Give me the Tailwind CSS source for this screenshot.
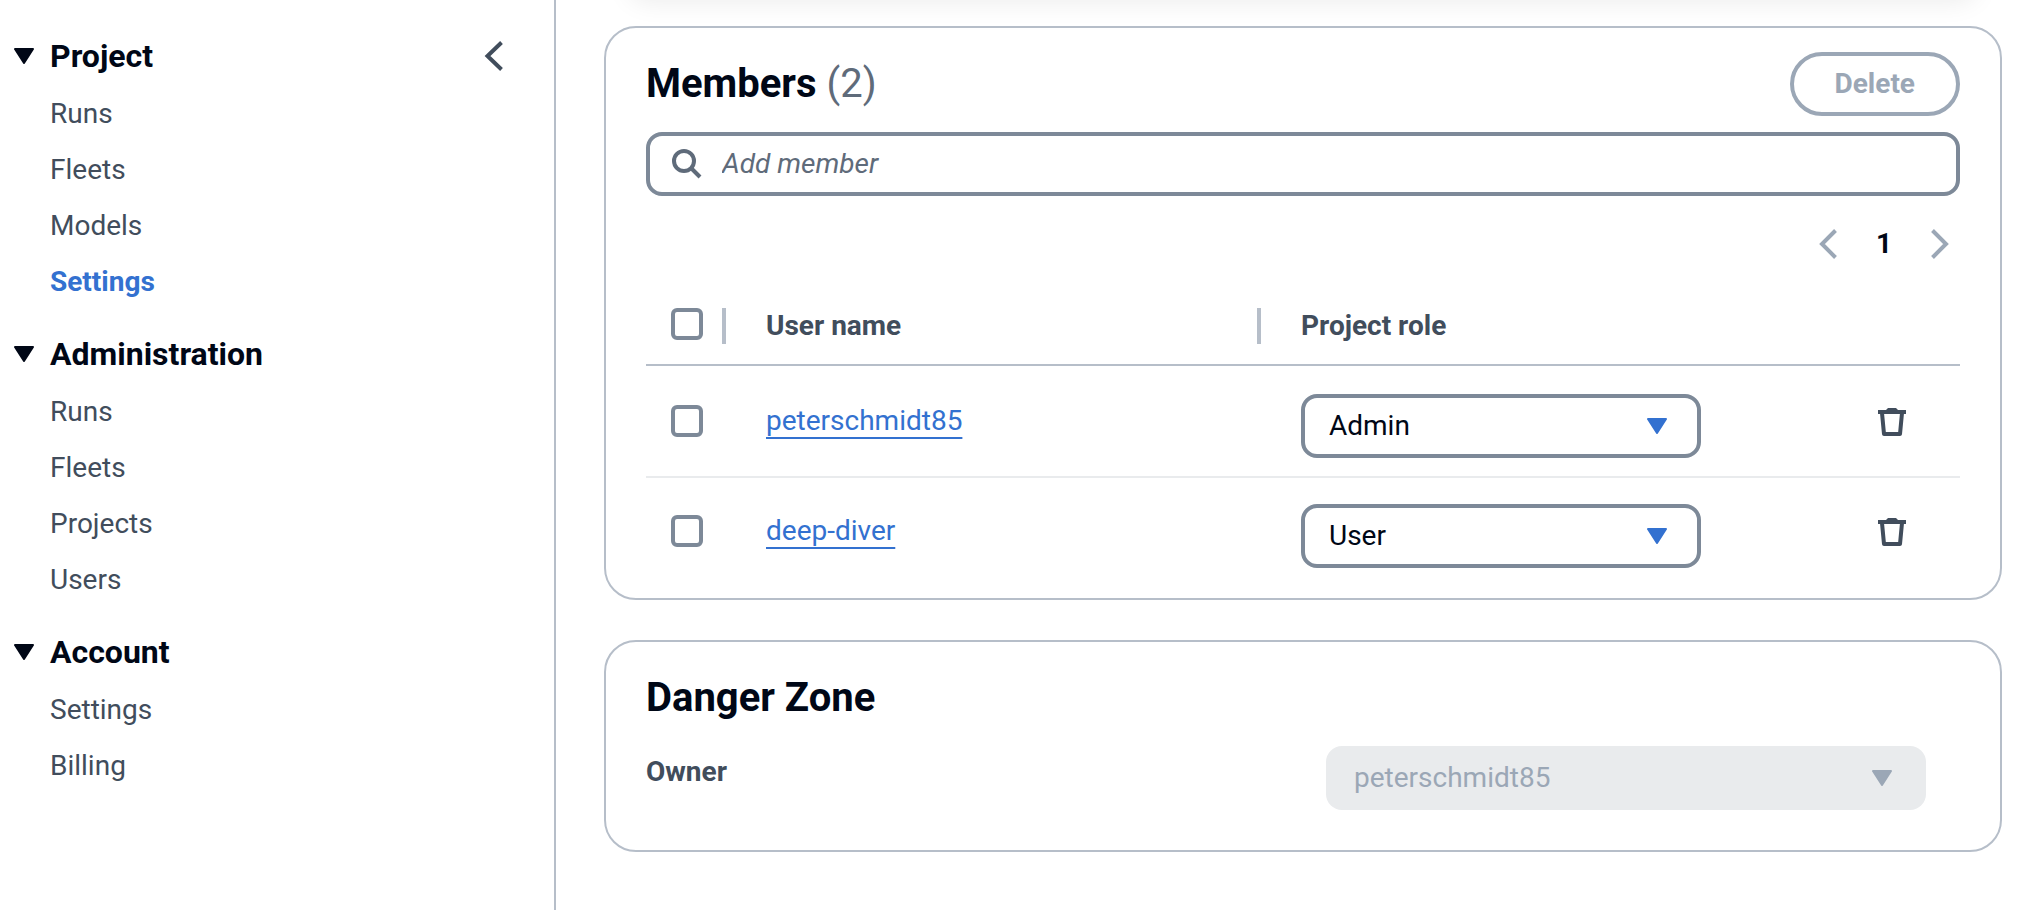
<!DOCTYPE html>
<html lang="en">
<head>
<meta charset="utf-8">
<title>Project settings</title>
<script src="https://cdn.jsdelivr.net/npm/@tailwindcss/browser@4"></script>
</head>
<body class="flex min-h-screen bg-white font-[Roboto,sans-serif] text-[28px] leading-10 text-[#414d5c]">

<nav aria-label="Main" class="flex w-[556px] shrink-0 items-start justify-between border-r-2 border-[#b6bec9] pt-9 pr-[51px] pl-[14px]">
  <div class="flex flex-col gap-8">
    <section>
      <button type="button" aria-expanded="true" class="flex h-10 items-center gap-4 text-[32px] font-bold text-[#000716]">
        <svg class="h-4 w-5" viewBox="0 0 20 16" fill="currentColor" stroke="currentColor" stroke-width="2" stroke-linejoin="round" aria-hidden="true"><path d="M1 1h18l-9 14z"/></svg>
        Project
      </button>
      <ul class="mt-[18px] flex flex-col gap-4 pl-9">
        <li><a href="#">Runs</a></li>
        <li><a href="#">Fleets</a></li>
        <li><a href="#">Models</a></li>
        <li><a href="#" aria-current="page" class="font-bold text-[#3371d0]">Settings</a></li>
      </ul>
    </section>
    <section>
      <button type="button" aria-expanded="true" class="flex h-10 items-center gap-4 text-[32px] font-bold text-[#000716]">
        <svg class="h-4 w-5" viewBox="0 0 20 16" fill="currentColor" stroke="currentColor" stroke-width="2" stroke-linejoin="round" aria-hidden="true"><path d="M1 1h18l-9 14z"/></svg>
        Administration
      </button>
      <ul class="mt-[18px] flex flex-col gap-4 pl-9">
        <li><a href="#">Runs</a></li>
        <li><a href="#">Fleets</a></li>
        <li><a href="#">Projects</a></li>
        <li><a href="#">Users</a></li>
      </ul>
    </section>
    <section>
      <button type="button" aria-expanded="true" class="flex h-10 items-center gap-4 text-[32px] font-bold text-[#000716]">
        <svg class="h-4 w-5" viewBox="0 0 20 16" fill="currentColor" stroke="currentColor" stroke-width="2" stroke-linejoin="round" aria-hidden="true"><path d="M1 1h18l-9 14z"/></svg>
        Account
      </button>
      <ul class="mt-[18px] flex flex-col gap-4 pl-9">
        <li><a href="#">Settings</a></li>
        <li><a href="#">Billing</a></li>
      </ul>
    </section>
  </div>
  <button type="button" aria-label="Close navigation" class="flex h-10 items-center">
    <svg class="h-[30px] w-[19px]" viewBox="0 0 19 30" fill="none" stroke="currentColor" stroke-width="4" aria-hidden="true"><path d="M17.5 1.5 3.5 15l14 13.5"/></svg>
  </button>
</nav>

<main class="flex min-w-0 flex-1 flex-col overflow-hidden pr-[38px] pl-12">
  <!-- Lower edge of the sticky card scrolled above the view -->
  <div class="mx-6 -mt-10 mb-[26px] h-10 shrink-0 rounded-[32px] shadow-[0_2px_26px_rgba(0,0,0,0.08)]"></div>

  <section class="rounded-[32px] border-2 border-[#b6bec9] px-10 pt-6 pb-3">
    <div class="flex items-center justify-between">
      <h2 class="text-[40px] leading-[48px] font-bold text-[#000716]">Members <span class="font-normal text-[#5f6b7a]">(2)</span></h2>
      <button type="button" disabled class="h-16 rounded-full border-4 border-[#9ba7b6] px-[41px] font-bold text-[#9ba7b6]">Delete</button>
    </div>

    <label class="mt-4 flex h-16 items-center gap-5 rounded-2xl border-4 border-[#7d8998] px-[22px] text-[#5f6b7a]">
      <svg class="size-[30px] shrink-0" viewBox="0 0 30 30" fill="none" stroke="currentColor" stroke-width="4" aria-hidden="true"><circle cx="12" cy="12" r="10"/><path d="m19 19 9 9"/></svg>
      <input type="text" aria-label="Add member" placeholder="Add member" class="min-w-0 flex-1 outline-none placeholder:text-[#5f6b7a] placeholder:italic">
    </label>

    <div class="mt-7 flex h-10 items-center justify-end gap-[39px] pr-[11px]">
      <button type="button" disabled aria-label="Previous page" class="text-[#9ba7b6]">
        <svg class="h-[30px] w-[18px]" viewBox="0 0 18 30" fill="none" stroke="currentColor" stroke-width="4" aria-hidden="true"><path d="M16.5 1.5 3 15l13.5 13.5"/></svg>
      </button>
      <button type="button" aria-current="page" class="font-bold text-[#000716]">1</button>
      <button type="button" disabled aria-label="Next page" class="text-[#9ba7b6]">
        <svg class="h-[30px] w-[18px]" viewBox="0 0 18 30" fill="none" stroke="currentColor" stroke-width="4" aria-hidden="true"><path d="M1.5 1.5 15 15 1.5 28.5"/></svg>
      </button>
    </div>

    <table class="mt-6 w-full table-fixed border-separate border-spacing-0 text-left">
      <thead>
        <tr class="h-[78px]">
          <th scope="col" class="w-20 border-b-2 border-[#b6bec9] p-0">
            <div class="flex h-9 items-start justify-between pl-[25px]">
              <input type="checkbox" aria-label="Select all members" class="size-8 appearance-none rounded-md border-4 border-[#7d8998] checked:bg-[#3371d0]">
              <span class="h-9 w-1 bg-[#b6bec9]"></span>
            </div>
          </th>
          <th scope="col" class="w-[535px] border-b-2 border-[#b6bec9] p-0">
            <div class="flex h-9 items-center justify-between pl-10">
              <span class="font-bold">User name</span>
              <span class="h-9 w-1 bg-[#b6bec9]"></span>
            </div>
          </th>
          <th scope="col" class="border-b-2 border-[#b6bec9] p-0 pl-10 font-bold">Project role</th>
          <th scope="col" class="w-40 border-b-2 border-[#b6bec9] p-0" aria-label="Actions"></th>
        </tr>
      </thead>
      <tbody>
        <tr>
          <td class="border-t-2 border-b-2 border-t-transparent border-b-[#e9ebed] pb-0.5 pl-[25px]">
            <input type="checkbox" aria-label="Select peterschmidt85" class="block size-8 appearance-none rounded-md border-4 border-[#7d8998] checked:bg-[#3371d0]">
          </td>
          <td class="border-t-2 border-b-2 border-t-transparent border-b-[#e9ebed] pb-0.5 pl-10">
            <a href="#" class="text-[#3371d0] underline decoration-2 underline-offset-[7px]">peterschmidt85</a>
          </td>
          <td class="border-t-2 border-b-2 border-t-transparent border-b-[#e9ebed] pt-[26px] pb-[18px] pl-10">
            <div class="relative w-[400px] max-w-full">
              <select aria-label="Role of peterschmidt85" class="block h-16 w-full appearance-none rounded-2xl border-4 border-[#7d8998] pr-16 pl-6 text-[#000716]"><option>Admin</option><option>User</option></select>
              <svg class="pointer-events-none absolute top-6 right-[34px] h-4 w-5 text-[#3371d0]" viewBox="0 0 20 16" fill="currentColor" stroke="currentColor" stroke-width="2" stroke-linejoin="round" aria-hidden="true"><path d="M1 1h18l-9 14z"/></svg>
            </div>
          </td>
          <td class="border-t-2 border-b-2 border-t-transparent border-b-[#e9ebed] pr-[54px]">
            <button type="button" aria-label="Remove peterschmidt85" class="ml-auto block">
              <svg class="size-7" viewBox="0 0 28 28" aria-hidden="true"><path d="M10 0h8l2 2h8v4H0V2h8z" fill="currentColor"/><path d="m4 5 2 21h16l2-21" fill="none" stroke="currentColor" stroke-width="4" stroke-linejoin="round"/></svg>
            </button>
          </td>
        </tr>
        <tr>
          <td class="pb-0.5 pl-[25px]">
            <input type="checkbox" aria-label="Select deep-diver" class="block size-8 appearance-none rounded-md border-4 border-[#7d8998] checked:bg-[#3371d0]">
          </td>
          <td class="pb-0.5 pl-10">
            <a href="#" class="text-[#3371d0] underline decoration-2 underline-offset-[7px]">deep-diver</a>
          </td>
          <td class="pt-[26px] pb-[18px] pl-10">
            <div class="relative w-[400px] max-w-full">
              <select aria-label="Role of deep-diver" class="block h-16 w-full appearance-none rounded-2xl border-4 border-[#7d8998] pr-16 pl-6 text-[#000716]"><option>User</option><option>Admin</option></select>
              <svg class="pointer-events-none absolute top-6 right-[34px] h-4 w-5 text-[#3371d0]" viewBox="0 0 20 16" fill="currentColor" stroke="currentColor" stroke-width="2" stroke-linejoin="round" aria-hidden="true"><path d="M1 1h18l-9 14z"/></svg>
            </div>
          </td>
          <td class="pr-[54px]">
            <button type="button" aria-label="Remove deep-diver" class="ml-auto block">
              <svg class="size-7" viewBox="0 0 28 28" aria-hidden="true"><path d="M10 0h8l2 2h8v4H0V2h8z" fill="currentColor"/><path d="m4 5 2 21h16l2-21" fill="none" stroke="currentColor" stroke-width="4" stroke-linejoin="round"/></svg>
            </button>
          </td>
        </tr>
      </tbody>
    </table>
  </section>

  <section class="mt-10 rounded-[32px] border-2 border-[#b6bec9] px-10 pt-8 pb-10">
    <h2 class="text-[40px] leading-[48px] font-bold text-[#000716]">Danger Zone</h2>
    <div class="mt-6 flex items-start justify-between pr-[34px]">
      <label for="owner" class="pt-1.5 font-bold">Owner</label>
      <div class="relative w-[600px]">
        <select id="owner" disabled class="block h-16 w-full appearance-none rounded-2xl bg-[#e9ebed] pr-16 pl-7 text-[#9ba7b6] opacity-100"><option>peterschmidt85</option></select>
        <svg class="pointer-events-none absolute top-6 right-[34px] h-4 w-5 text-[#9ba7b6]" viewBox="0 0 20 16" fill="currentColor" stroke="currentColor" stroke-width="2" stroke-linejoin="round" aria-hidden="true"><path d="M1 1h18l-9 14z"/></svg>
      </div>
    </div>
  </section>
</main>
</body>
</html>
